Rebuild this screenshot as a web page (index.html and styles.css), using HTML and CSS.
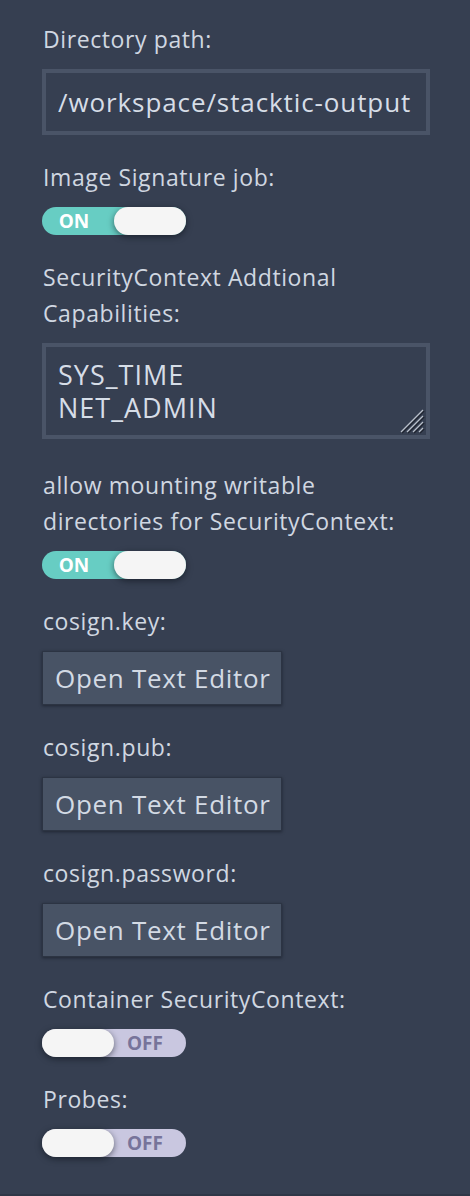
FILE: index.html
```html
<!DOCTYPE html>
<html lang="en">
<head>
<meta charset="utf-8">
<title>Settings</title>
<link rel="stylesheet" href="styles.css">
</head>
<body>
<div class="panel">
  <div class="field">
    <div class="label">Directory path:</div>
    <input class="text-input" type="text" value="/workspace/stacktic-output">
  </div>
  <div class="field">
    <div class="label">Image Signature job:</div>
    <div class="toggle on"><span class="toggle-text">ON</span><span class="knob"></span></div>
  </div>
  <div class="field field-area">
    <div class="label">SecurityContext Addtional Capabilities:</div>
    <div class="area-wrap">
      <textarea class="text-area" rows="2">SYS_TIME
NET_ADMIN</textarea>
      <svg class="grip" width="26" height="26" viewBox="0 0 26 26">
        <g stroke="#1f2430" stroke-width="1.6">
          <line x1="25" y1="3" x2="3" y2="25"/>
          <line x1="25" y1="9" x2="9" y2="25"/>
          <line x1="25" y1="15" x2="15" y2="25"/>
          <line x1="25" y1="21" x2="21" y2="25"/>
        </g>
        <g stroke="#b8bfca" stroke-width="1.2">
          <line x1="24" y1="2" x2="2" y2="24"/>
          <line x1="24" y1="8" x2="8" y2="24"/>
          <line x1="24" y1="14" x2="14" y2="24"/>
          <line x1="24" y1="20" x2="20" y2="24"/>
        </g>
      </svg>
    </div>
  </div>
  <div class="field">
    <div class="label">allow mounting writable directories for SecurityContext:</div>
    <div class="toggle on"><span class="toggle-text">ON</span><span class="knob"></span></div>
  </div>
  <div class="field">
    <div class="label">cosign.key:</div>
    <button class="btn" type="button">Open Text Editor</button>
  </div>
  <div class="field">
    <div class="label">cosign.pub:</div>
    <button class="btn" type="button">Open Text Editor</button>
  </div>
  <div class="field">
    <div class="label">cosign.password:</div>
    <button class="btn" type="button">Open Text Editor</button>
  </div>
  <div class="field">
    <div class="label">Container SecurityContext:</div>
    <div class="toggle off"><span class="knob"></span><span class="toggle-text">OFF</span></div>
  </div>
  <div class="field">
    <div class="label">Probes:</div>
    <div class="toggle off"><span class="knob"></span><span class="toggle-text">OFF</span></div>
  </div>
</div>
</body>
</html>
```

FILE: styles.css
```css
html, body {
  margin: 0;
  padding: 0;
  background: #363f51;
}

body {
  font-family: "Open Sans", "Noto Sans", sans-serif;
  color: #cfd6e0;
  width: 470px;
  height: 1196px;
  overflow: hidden;
}

.panel {
  box-sizing: border-box;
  height: 1196px;
  padding: 21px 30px 0 42px;
  border-bottom: 2px solid #2f3747;
}

.field {
  margin-bottom: 24px;
}

.field-area {
  margin-bottom: 28px;
}

.label {
  font-size: 23px;
  line-height: 36px;
  letter-spacing: 0.6px;
  color: #d0d7e1;
  padding-left: 1px;
  margin-bottom: 12px;
  max-width: 380px;
}

.text-input {
  display: block;
  box-sizing: border-box;
  width: 388px;
  height: 66px;
  margin: 0;
  padding: 0 0 0 12px;
  border: 4px solid #4a5467;
  background: #363f51;
  color: #d6dde7;
  font-family: "Open Sans", "Noto Sans", sans-serif;
  font-size: 26px;
  letter-spacing: 0.9px;
  outline: none;
}

.area-wrap {
  position: relative;
  width: 388px;
}

.text-area {
  display: block;
  box-sizing: border-box;
  width: 388px;
  height: 96px;
  margin: 0;
  padding: 12px 12px 0 12px;
  border: 4px solid #4a5467;
  background: #363f51;
  color: #d6dde7;
  font-family: "Open Sans", "Noto Sans", sans-serif;
  font-size: 27px;
  line-height: 32.7px;
  letter-spacing: 1px;
  resize: none;
  outline: none;
  overflow: hidden;
}

.grip {
  position: absolute;
  right: 5px;
  bottom: 5px;
}

.toggle {
  display: flex;
  align-items: center;
  width: 144px;
  height: 28px;
  border-radius: 14px;
}

.toggle.on {
  background: #67cdc3;
}

.toggle.off {
  background: #c9c7e0;
}

.toggle-text {
  width: 72px;
  text-align: center;
  font-family: "Open Sans", "Noto Sans", sans-serif;
  font-weight: 700;
  font-size: 19px;
  line-height: 28px;
  margin-left: -4px;
}

.toggle.on .toggle-text {
  color: #ffffff;
}

.toggle.off .toggle-text {
  color: #77749a;
  margin-left: -5px;
}

.knob {
  display: block;
  width: 72px;
  height: 28px;
  border-radius: 14px;
  background: #f5f5f5;
  box-shadow: 0 2px 6px rgba(10, 14, 22, 0.55);
}

.toggle.on .knob {
  margin-left: auto;
}

.btn {
  display: block;
  box-sizing: border-box;
  width: 240px;
  height: 54px;
  margin: 0;
  padding: 0 0 0 12px;
  text-align: left;
  border: 1px solid #2c3443;
  background: #485365;
  color: #d3dae4;
  font-family: "Open Sans", "Noto Sans", sans-serif;
  font-size: 26px;
  letter-spacing: 0.7px;
  white-space: nowrap;
  box-shadow: 0 1px 3px rgba(10, 14, 22, 0.5);
  cursor: pointer;
}
```
